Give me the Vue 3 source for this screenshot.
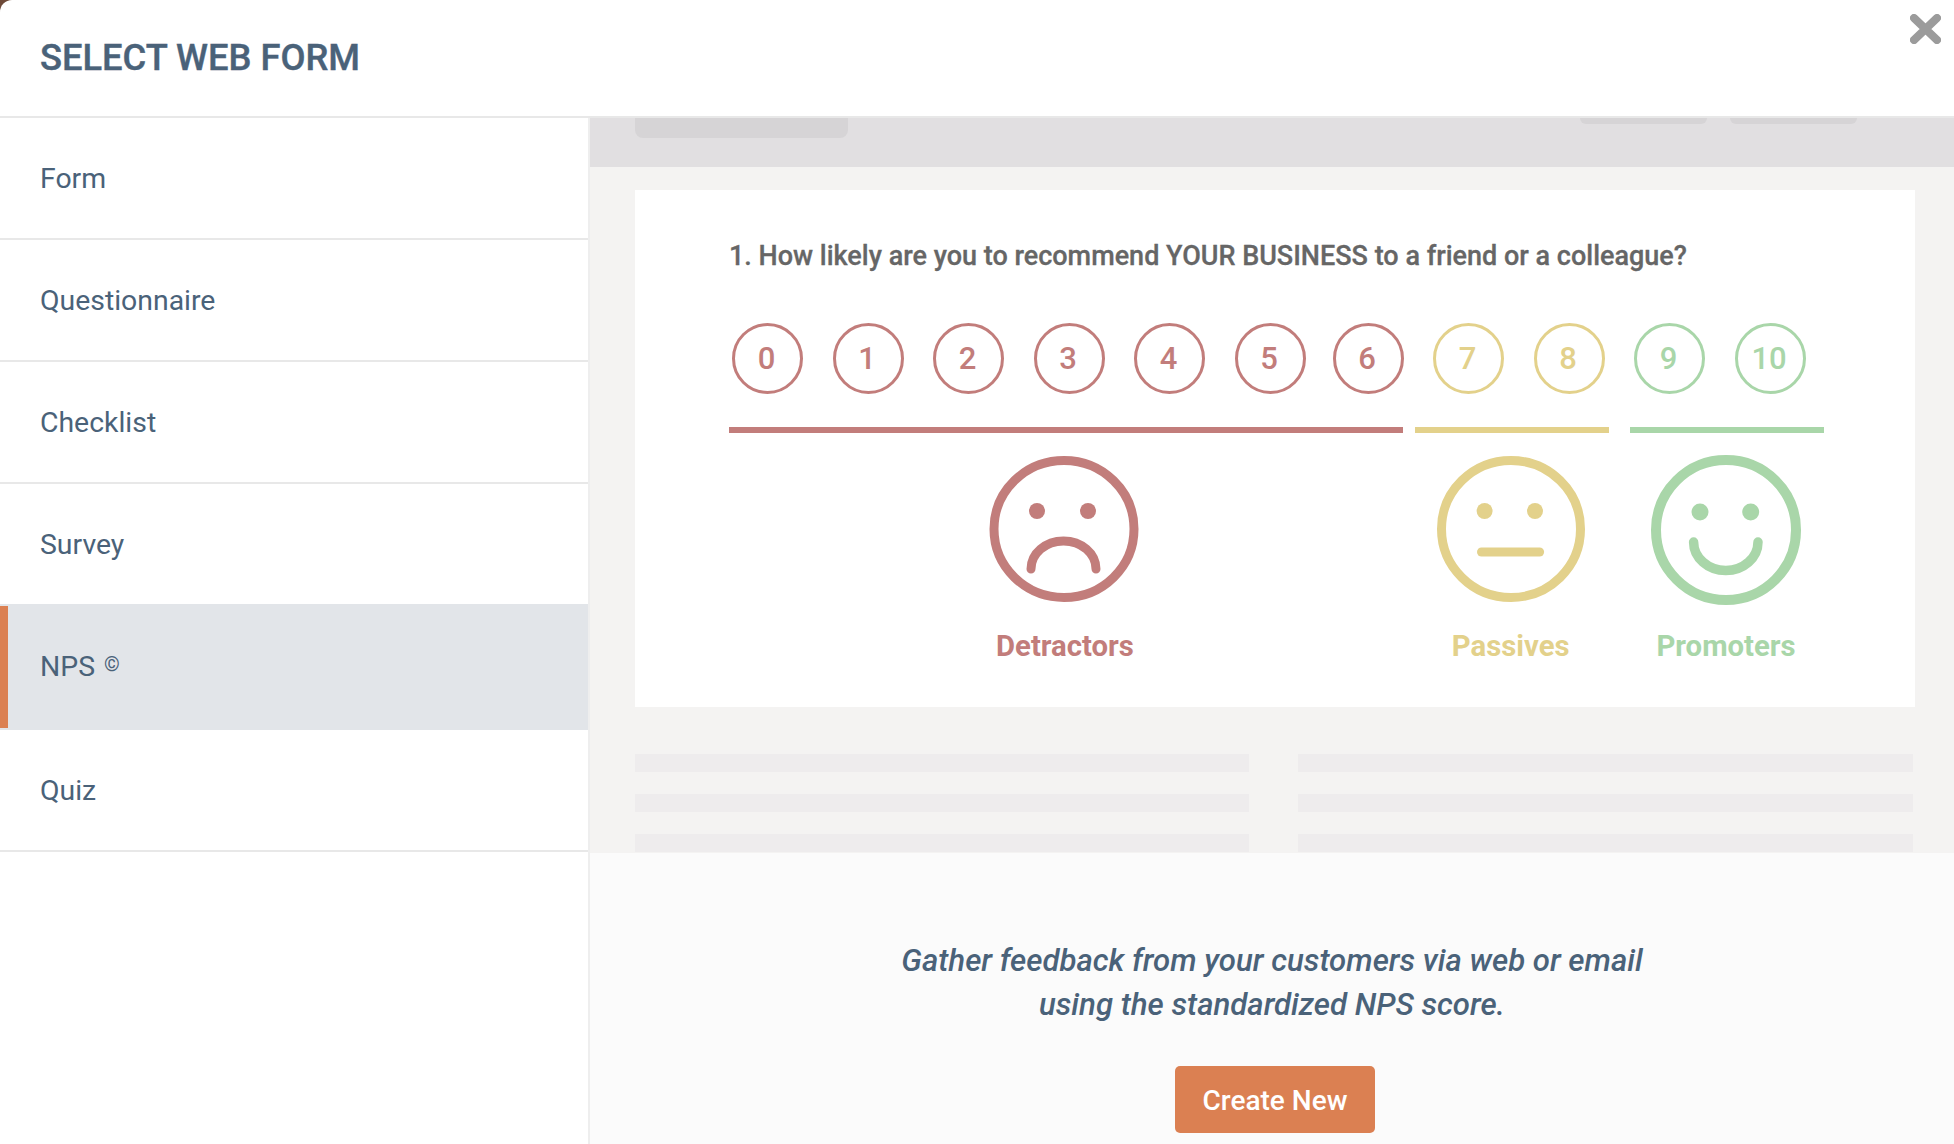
<script setup>
const menu = [
  { label: 'Form' },
  { label: 'Questionnaire' },
  { label: 'Checklist' },
  { label: 'Survey' },
  { label: 'NPS', mark: '©', active: true },
  { label: 'Quiz' },
]
const scores = [
  { n: 0, tone: 'red' }, { n: 1, tone: 'red' }, { n: 2, tone: 'red' }, { n: 3, tone: 'red' },
  { n: 4, tone: 'red' }, { n: 5, tone: 'red' }, { n: 6, tone: 'red', tight: true },
  { n: 7, tone: 'yellow' }, { n: 8, tone: 'yellow' }, { n: 9, tone: 'green' }, { n: 10, tone: 'green' },
]
</script>

<template>
  <div class="modal">
    <header class="head">
      <h1 class="title">SELECT WEB FORM</h1>
      <svg class="close" viewBox="0 0 31 30" aria-label="Close">
        <path d="M4 4 L27 26 M27 4 L4 26" />
      </svg>
    </header>
    <div class="body">
      <nav class="side">
        <a v-for="m in menu" :key="m.label" class="item" :class="{ active: m.active }">
          {{ m.label }}<sup v-if="m.mark" class="mark">{{ m.mark }}</sup>
        </a>
      </nav>
      <main class="main">
        <section class="preview">
          <div class="topbar">
            <span class="pill big"></span>
            <span class="grow"></span>
            <span class="pill small"></span>
            <span class="pill small"></span>
          </div>
          <div class="canvas">
            <div class="card">
              <p class="question">1. How likely are you to recommend YOUR BUSINESS to a friend or a colleague?</p>
              <div class="scores">
                <span v-for="s in scores" :key="s.n" class="score" :class="[s.tone, { tight: s.tight }]"><span class="digit">{{ s.n }}</span></span>
              </div>
              <div class="groups">
                <div class="group g-red red">
                  <div class="bar"></div>
                  <svg class="face" viewBox="0 0 150 150">
                    <ellipse cx="73" cy="74" rx="70" ry="68.5" stroke-width="9" />
                    <circle class="dot" cx="46" cy="56" r="8" />
                    <circle class="dot" cx="97" cy="56" r="8" />
                    <path d="M40 114 A32.5 28 0 0 1 105 114" stroke-width="9" />
                  </svg>
                  <div class="label">Detractors</div>
                </div>
                <div class="group g-yellow yellow">
                  <div class="bar"></div>
                  <svg class="face" viewBox="0 0 150 150">
                    <ellipse cx="74" cy="74" rx="69.5" ry="68.5" stroke-width="9" />
                    <circle class="dot" cx="47.6" cy="56" r="8" />
                    <circle class="dot" cx="98" cy="56" r="8" />
                    <path d="M44.5 97 H102.6" stroke-width="9" />
                  </svg>
                  <div class="label">Passives</div>
                </div>
                <div class="group g-green green">
                  <div class="bar"></div>
                  <svg class="face" viewBox="0 0 150 150">
                    <ellipse cx="74" cy="75" rx="70" ry="70" stroke-width="10" />
                    <circle class="dot" cx="48" cy="57" r="8.5" />
                    <circle class="dot" cx="98.7" cy="57" r="8.5" />
                    <path d="M41.6 87 A32.2 28.5 0 0 0 106 87" stroke-width="9.5" />
                  </svg>
                  <div class="label">Promoters</div>
                </div>
              </div>
            </div>
            <div class="skeleton">
              <span v-for="i in 6" :key="i" class="line"></span>
            </div>
          </div>
        </section>
        <footer class="foot">
          <p class="blurb">Gather feedback from your customers via web or email<br />using the standardized NPS score.</p>
          <button class="create">Create New</button>
        </footer>
      </main>
    </div>
  </div>
</template>

<style>
html, body { margin: 0; background: #6e4a38; }
</style>

<style scoped>
.modal {
  width: 1954px;
  height: 1144px;
  background: #fff;
  border-top-left-radius: 12px;
  display: flex;
  flex-direction: column;
  overflow: hidden;
  font-family: Roboto, "Liberation Sans", sans-serif;
  color: #4a6279;
}
.head {
  height: 116px;
  flex: none;
  border-bottom: 2px solid #e8e8e8;
  display: flex;
  align-items: center;
  padding-left: 40px;
  position: relative;
}
.title {
  margin: 0;
  font-size: 36.3px;
  font-weight: 500;
  line-height: 1;
  color: #4a6279;
  -webkit-text-stroke: 0.4px #4a6279;
}
.close {
  position: absolute;
  left: 1910px;
  top: 14px;
  width: 31px;
  height: 30px;
  fill: none;
  stroke: #9b9b9b;
  stroke-width: 8;
  stroke-linecap: round;
}
.body { flex: 1; display: flex; min-height: 0; }
.side {
  width: 588px;
  flex: none;
  border-right: 2px solid #eeeeee;
  display: flex;
  flex-direction: column;
}
.item {
  height: 122px;
  box-sizing: border-box;
  flex: none;
  border-bottom: 2px solid #e8e8e8;
  padding: 2px 0 0 40px;
  display: flex;
  align-items: center;
  font-size: 28.4px;
  line-height: 1;
}
.item.active {
  height: 124px;
  padding-top: 0;
  background: #e2e5e9;
  border-bottom-color: #e2e5e9;
  box-shadow: inset 8px 0 0 #db8052, 0 -2px 0 #e2e5e9;
}
.mark {
  font-size: 20px;
  margin-left: 9px;
  position: relative;
  top: -3px;
  line-height: 1;
}
.main { flex: 1; display: flex; flex-direction: column; min-width: 0; }
.preview { height: 735px; flex: none; background: #f4f3f2; overflow: hidden; }
.topbar {
  height: 49px;
  background: #e1dfe1;
  display: flex;
  align-items: flex-start;
  gap: 23px;
  padding: 0 97px 0 45px;
}
.grow { flex: 1; }
.pill { background: #d6d4d6; display: block; }
.pill.big { width: 213px; height: 20px; border-radius: 0 0 8px 8px; }
.pill.small { width: 127px; height: 6px; border-radius: 0 0 6px 6px; }
.canvas { padding: 23px 39px 0 45px; }
.card {
  height: 517px;
  background: #fff;
  padding: 51px 0 0 94px;
  box-sizing: border-box;
}
.question {
  margin: 0;
  font-size: 27px;
  font-weight: 500;
  line-height: 30px;
  color: #666;
  -webkit-text-stroke: 0.3px #666;
}
.scores { display: flex; gap: 29.5px; margin: 52px 0 0 3px; }
.score {
  width: 71px;
  height: 71px;
  box-sizing: border-box;
  border-radius: 50%;
  border: 3px solid currentColor;
  display: flex;
  align-items: center;
  justify-content: center;
  font-size: 31px;
  font-weight: 500;
}
.digit { margin-left: -2px; }
.score.tight { margin-left: -2.5px; }
.red { color: #c27d7b; }
.yellow { color: #e3d18b; }
.green { color: #a9d6a9; }
.groups { display: flex; margin-top: 33px; }
.group { display: flex; flex-direction: column; align-items: center; flex: none; }
.g-red { width: 674px; }
.g-yellow { width: 194.5px; margin-left: 11.5px; }
.g-green { width: 194px; margin-left: 21px; }
.bar { height: 6px; width: 100%; background: currentColor; }
.face {
  width: 150px;
  height: 150px;
  margin-top: 22px;
  overflow: visible;
  fill: none;
  stroke: currentColor;
  stroke-linecap: round;
}
.dot { fill: currentColor; stroke: none; }
.label {
  margin: 25px 2px 0 0;
  font-size: 29.3px;
  font-weight: 700;
  line-height: 32px;
}
.skeleton {
  display: grid;
  grid-template-columns: 614px 615px;
  column-gap: 49px;
  row-gap: 22px;
  margin-top: 47px;
}
.line { height: 18px; background: #eeeced; display: block; }
.foot {
  flex: 1;
  background: #fbfbfb;
  display: flex;
  flex-direction: column;
  align-items: center;
  padding-top: 86px;
}
.blurb {
  margin: 0;
  font-size: 31.2px;
  font-style: italic;
  font-weight: 500;
  line-height: 44px;
  text-align: center;
  color: #4a6279;
}
.create {
  margin: 39px 0 0 6px;
  width: 200px;
  height: 67px;
  padding: 2px 0 0;
  border: none;
  border-radius: 5px;
  background: #db8052;
  color: #fff;
  font-family: inherit;
  font-size: 28px;
  font-weight: 500;
}
</style>
